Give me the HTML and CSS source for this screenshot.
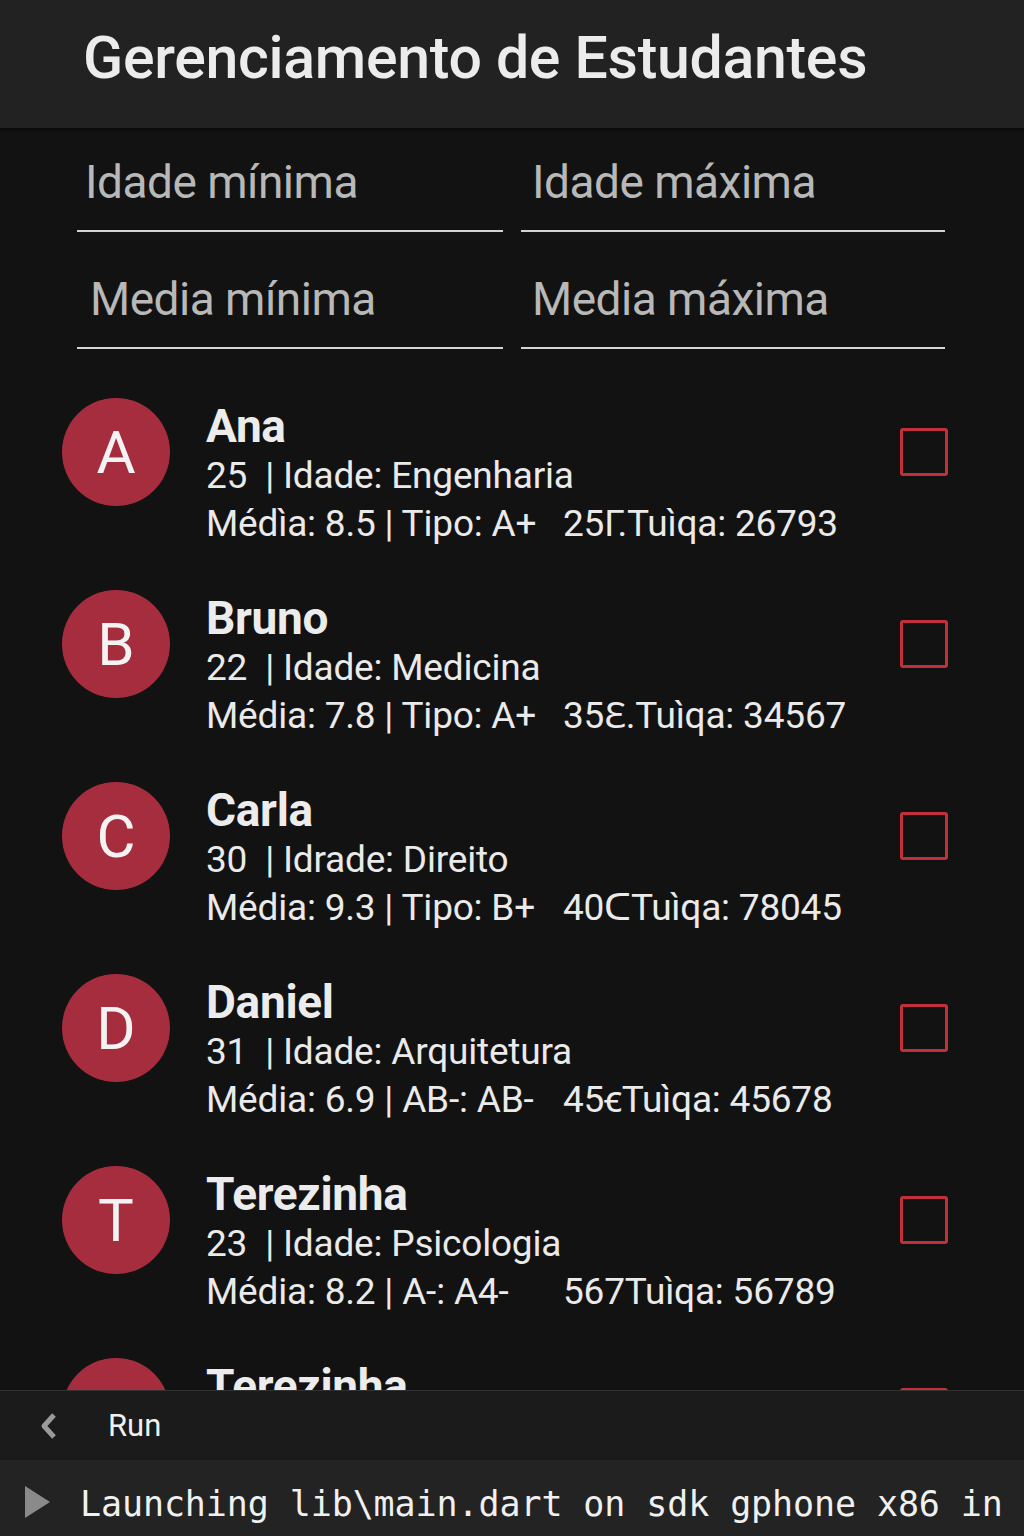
FILE: index.html
```html
<!DOCTYPE html>
<html lang="pt">
<head>
<meta charset="utf-8">
<title>Gerenciamento de Estudantes</title>
<link rel="stylesheet" href="styles.css">
</head>
<body>
<div class="app">
  <header class="appbar"><h1 class="title">Gerenciamento de Estudantes</h1></header>
  <section class="filters">
    <div class="field"><span class="label">Idade mínima</span></div>
    <div class="field"><span class="label">Idade máxima</span></div>
    <div class="field"><span class="label l2">Media mínima</span></div>
    <div class="field"><span class="label">Media máxima</span></div>
  </section>
  <section class="list">
    <div class="item">
      <div class="avatar">A</div>
      <div class="info">
        <div class="name">Ana</div>
        <div class="line">25 &nbsp;| Idade: Engenharia</div>
        <div class="line"><span class="c1">Médìa: 8.5 | Tipo: A+</span>25Γ.Tuìqa: 26793</div>
      </div>
      <div class="check"></div>
    </div>
    <div class="item">
      <div class="avatar">B</div>
      <div class="info">
        <div class="name">Bruno</div>
        <div class="line">22 &nbsp;| Idade: Medicina</div>
        <div class="line"><span class="c1">Média: 7.8 | Tipo: A+</span>35Ɛ.Tuìqa: 34567</div>
      </div>
      <div class="check"></div>
    </div>
    <div class="item">
      <div class="avatar">C</div>
      <div class="info">
        <div class="name">Carla</div>
        <div class="line">30 &nbsp;| Idrade: Direito</div>
        <div class="line"><span class="c1">Média: 9.3 | Tipo: B+</span>40ᑕTuìqa: 78045</div>
      </div>
      <div class="check"></div>
    </div>
    <div class="item">
      <div class="avatar">D</div>
      <div class="info">
        <div class="name">Daniel</div>
        <div class="line">31 &nbsp;| Idade: Arquitetura</div>
        <div class="line"><span class="c1">Média: 6.9 | AB-: AB-</span>45ꞓTuìqa: 45678</div>
      </div>
      <div class="check"></div>
    </div>
    <div class="item">
      <div class="avatar">T</div>
      <div class="info">
        <div class="name">Terezinha</div>
        <div class="line">23 &nbsp;| Idade: Psicologia</div>
        <div class="line"><span class="c1">Média: 8.2 | A-: A4-</span>567Tuìqa: 56789</div>
      </div>
      <div class="check"></div>
    </div>
    <div class="item">
      <div class="avatar">T</div>
      <div class="info">
        <div class="name">Terezinha</div>
        <div class="line">23 &nbsp;| Idade: Psicologia</div>
        <div class="line"><span class="c1">Média: 8.2 | A-: A-</span>567Tuìqa: 56789</div>
      </div>
      <div class="check"></div>
    </div>
  </section>
  <footer class="runbar">
    <svg class="chev" width="22" height="30" viewBox="0 0 22 30"><path d="M16 4 L6 15 L16 26" fill="none" stroke="#9a9a9a" stroke-width="5" stroke-linejoin="round"/></svg>
    <span class="run">Run</span>
  </footer>
  <div class="console">
    <svg class="play" width="28" height="34" viewBox="0 0 28 34"><path d="M1 1 L26 17 L1 33 Z" fill="#8a8a8a"/></svg>
    <span class="cmd">Launching lib\main.dart on sdk gphone x86 in</span>
  </div>
</div>
</body>
</html>
```
FILE: styles.css
```css
* { box-sizing: border-box; margin: 0; padding: 0; }
html, body { background: #121212; }
body { font-family: Roboto, "Noto Sans", sans-serif; color: #eee; }
.app { width: 1024px; height: 1536px; display: flex; flex-direction: column; overflow: hidden; background: #121212; }
.appbar { height: 128px; flex: none; background: #222222; padding: 26px 0 0 83px; box-shadow: 0 2px 3px rgba(0,0,0,0.5); position: relative; z-index: 1; }
.title { font-size: 59px; line-height: 64px; font-weight: 500; color: #ececec; letter-spacing: -0.3px; white-space: nowrap; }
.filters { flex: none; display: grid; grid-template-columns: 426px 424px; column-gap: 18px; row-gap: 13px; padding: 0 0 0 77px; }
.field { height: 104px; border-bottom: 2px solid #d4d4d4; padding: 28px 0 0 8px; }
.label { font-size: 46px; line-height: 52px; color: #b8b8b8; letter-spacing: -0.5px; }
.field:nth-child(2) .label, .field:nth-child(4) .label { padding-left: 3px; }
.label.l2 { padding-left: 5px; }
.list { flex: 1; overflow: hidden; padding-top: 7px; }
.item { height: 192px; display: flex; align-items: center; }
.avatar { flex: none; width: 108px; height: 108px; border-radius: 50%; background: #a62d3d; margin-left: 62px; display: flex; align-items: center; justify-content: center; font-size: 60px; color: #f3f3f3; }
.info { flex: 1; align-self: flex-start; padding: 44px 0 0 36px; }
.name { font-size: 46px; line-height: 52px; font-weight: 700; color: #ececec; letter-spacing: -0.3px; }
.line { font-size: 37px; line-height: 48px; color: #eaeaea; white-space: nowrap; letter-spacing: -0.2px; }
.c1 { display: inline-block; width: 357px; }
.check { flex: none; width: 48px; height: 48px; border: 3px solid #c2313a; border-radius: 3px; margin-right: 76px; }
.runbar { flex: none; height: 70px; background: #1b1b1b; border-top: 1px solid #333; display: flex; align-items: center; padding-left: 38px; }
.chev { margin-right: 48px; }
.run { font-size: 31px; color: #f0f0f0; }
.console { flex: none; height: 76px; background: #232323; display: flex; align-items: center; padding-left: 24px; }
.play { margin-right: 28px; margin-top: 8px; }
.cmd { font-family: "DejaVu Sans Mono", "Liberation Mono", monospace; font-size: 35px; color: #f0f0f0; white-space: nowrap; margin-top: 12px; letter-spacing: -0.1px; }
```
